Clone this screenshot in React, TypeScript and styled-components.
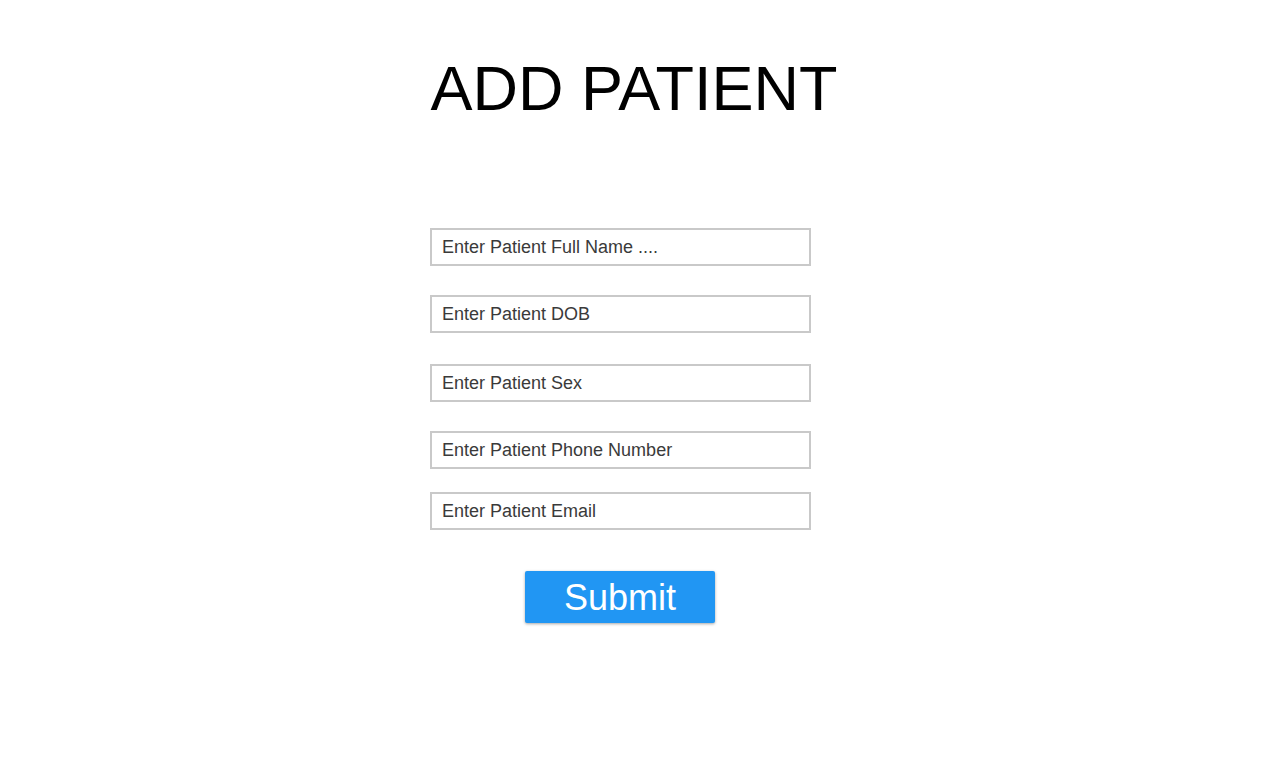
import React, { FC } from "react";
import styled, { createGlobalStyle } from "styled-components";

const GlobalStyle = createGlobalStyle`
  body {
    margin: 0;
    background: #ffffff;
    font-family: "Liberation Sans", Arial, Helvetica, sans-serif;
  }
`;

const Page = styled.div`
  display: flex;
  flex-direction: column;
  align-items: center;
  min-height: 768px;
`;

const Title = styled.h1`
  margin: 57px 12px 0 0;
  font-size: 63px;
  line-height: 1;
  font-weight: 400;
  color: #000;
`;

const Form = styled.form`
  display: flex;
  flex-direction: column;
  align-items: center;
  width: 381px;
  margin: 108px 39px 0 0;
`;

const Input = styled.input<{ $gap: number }>`
  box-sizing: border-box;
  width: 381px;
  height: 38px;
  margin-top: ${(p) => p.$gap}px;
  padding: 1px 10px 0;
  border: 2px solid #c9c9c9;
  border-radius: 0;
  font-family: "Liberation Sans", Arial, sans-serif;
  font-size: 18px;
  color: #333;
  outline: none;
  &::placeholder {
    color: #3a3a3a;
  }
`;

const Button = styled.button`
  width: 190px;
  height: 52px;
  margin: 41px 1px 0 0;
  border: none;
  border-radius: 2px;
  background-color: #2196f3;
  color: #fff;
  font-family: "Liberation Sans", Arial, sans-serif;
  font-size: 36px;
  line-height: 1;
  padding: 2px 0 0;
  box-shadow: 0 1px 3px rgba(0, 0, 0, 0.35);
  cursor: pointer;
`;

const fields = [
  { placeholder: "Enter Patient Full Name ....", gap: 0 },
  { placeholder: "Enter Patient DOB", gap: 29 },
  { placeholder: "Enter Patient Sex", gap: 31 },
  { placeholder: "Enter Patient Phone Number", gap: 29 },
  { placeholder: "Enter Patient Email", gap: 23 },
];

const App: FC = () => {
  return (
    <Page>
      <GlobalStyle />
      <Title>ADD PATIENT</Title>
      <Form onSubmit={(e) => e.preventDefault()}>
        {fields.map((f) => (
          <Input key={f.placeholder} type="text" placeholder={f.placeholder} $gap={f.gap} />
        ))}
        <Button type="submit">Submit</Button>
      </Form>
    </Page>
  );
};

export default App;
